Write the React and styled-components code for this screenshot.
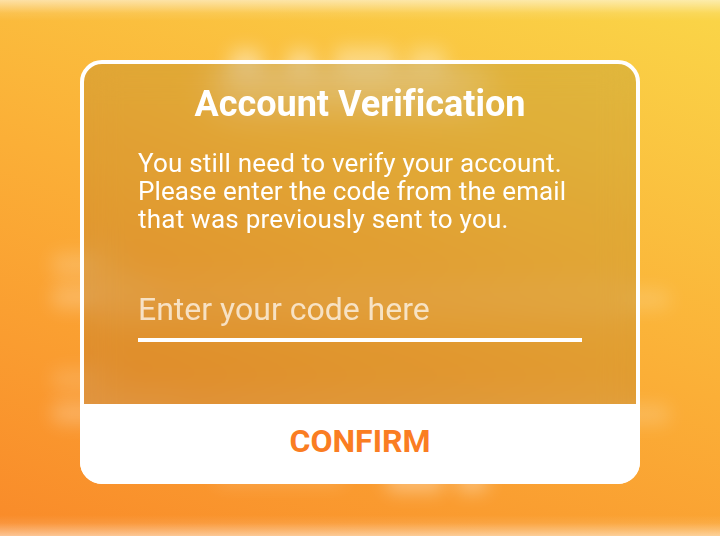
import React from "react";
import styled, { createGlobalStyle } from "styled-components";

const GlobalStyle = createGlobalStyle`
  * { box-sizing: border-box; }
  body { margin: 0; font-family: Roboto, "Liberation Sans", sans-serif; }
`;

const Screen = styled.main`
  position: relative;
  isolation: isolate;
  display: flex;
  justify-content: center;
  align-items: flex-start;
  width: 720px;
  height: 536px;
  padding-top: 60px;
  overflow: hidden;
  background:
    linear-gradient(rgba(255, 255, 255, 0.54), rgba(255, 255, 255, 0.34) 6px, rgba(255, 255, 255, 0.1) 13px, transparent 21px),
    linear-gradient(to top, rgba(255, 255, 255, 0.5), rgba(255, 255, 255, 0.3) 6px, rgba(255, 255, 255, 0.09) 13px, transparent 21px),
    linear-gradient(20deg, #f98a29, #fbaf37 50%, #fad648);
`;

const Glow = styled.span`
  position: absolute;
  z-index: -1;
  left: ${(p) => p.$x}px;
  top: ${(p) => p.$y}px;
  width: ${(p) => p.$w}px;
  height: ${(p) => p.$h}px;
  border-radius: 8px;
  background: rgba(255, 255, 255, ${(p) => p.$a});
  filter: blur(9px);
`;

const Dialog = styled.section`
  display: flex;
  flex-direction: column;
  width: 560px;
  height: 424px;
  border: 4px solid #fff;
  border-radius: 22px;
  background: rgba(0, 0, 0, 0.1);
  backdrop-filter: blur(18px);
`;

const Content = styled.div`
  display: flex;
  flex-direction: column;
  height: 340px;
  padding: 19px 54px 0;
  color: #fff;
`;

const Title = styled.h1`
  margin: 0;
  font-size: 36px;
  line-height: 42px;
  font-weight: 700;
  font-variant-ligatures: none;
  text-align: center;
  white-space: nowrap;
`;

const Message = styled.p`
  margin: 24px 0 0;
  font-size: 26px;
  line-height: 28px;
  white-space: nowrap;
`;

const MessageLine = styled.span`
  display: block;
  letter-spacing: ${(p) => p.$tracking}px;
`;

const CodeInput = styled.input`
  height: 64px;
  margin-top: 45px;
  padding: 2px 0 0;
  border: 0;
  border-bottom: 4px solid #fff;
  border-radius: 0;
  outline: 0;
  background: transparent;
  color: #fff;
  font: 400 32px/38px Roboto, sans-serif;
  &::placeholder { color: rgba(255, 255, 255, 0.7); opacity: 1; }
`;

const ConfirmButton = styled.button`
  flex: 1;
  margin: 0 -4px -4px;
  padding: 0 0 7px;
  border: 0;
  border-radius: 0 0 22px 22px;
  background: #fff;
  color: #fa7d22;
  font: 700 32px/38px Roboto, sans-serif;
`;

const glows = [
  { x: 230, y: 49, w: 32, h: 40, a: 0.4 },
  { x: 287, y: 50, w: 28, h: 40, a: 0.4 },
  { x: 334, y: 47, w: 62, h: 40, a: 0.34 },
  { x: 408, y: 48, w: 38, h: 40, a: 0.3 },
  { x: 215, y: 72, w: 275, h: 38, a: 0.24 },
  { x: 52, y: 253, w: 60, h: 24, a: 0.19 },
  { x: 52, y: 285, w: 110, h: 24, a: 0.22 },
  { x: 52, y: 369, w: 60, h: 22, a: 0.15 },
  { x: 52, y: 402, w: 130, h: 22, a: 0.24 },
  { x: 160, y: 290, w: 510, h: 19, a: 0.17 },
  { x: 180, y: 405, w: 490, h: 19, a: 0.19 },
  { x: 215, y: 470, w: 130, h: 15, a: 0.16 },
  { x: 386, y: 470, w: 58, h: 22, a: 0.34 },
  { x: 456, y: 470, w: 32, h: 22, a: 0.34 },
];

const messageLines = [
  { text: "You still need to verify your account.", tracking: 0.2 },
  { text: "Please enter the code from the email", tracking: 0.1 },
  { text: "that was previously sent to you.", tracking: 0.24 },
];

export default function App() {
  return (
    <>
      <GlobalStyle />
      <Screen>
        {glows.map((g) => (
          <Glow key={`${g.x}-${g.y}`} $x={g.x} $y={g.y} $w={g.w} $h={g.h} $a={g.a} />
        ))}
        <Dialog>
          <Content>
            <Title>Account Verification</Title>
            <Message>
              {messageLines.map((line) => (
                <MessageLine key={line.text} $tracking={line.tracking}>
                  {line.text}
                </MessageLine>
              ))}
            </Message>
            <CodeInput placeholder="Enter your code here" />
          </Content>
          <ConfirmButton>CONFIRM</ConfirmButton>
        </Dialog>
      </Screen>
    </>
  );
}
